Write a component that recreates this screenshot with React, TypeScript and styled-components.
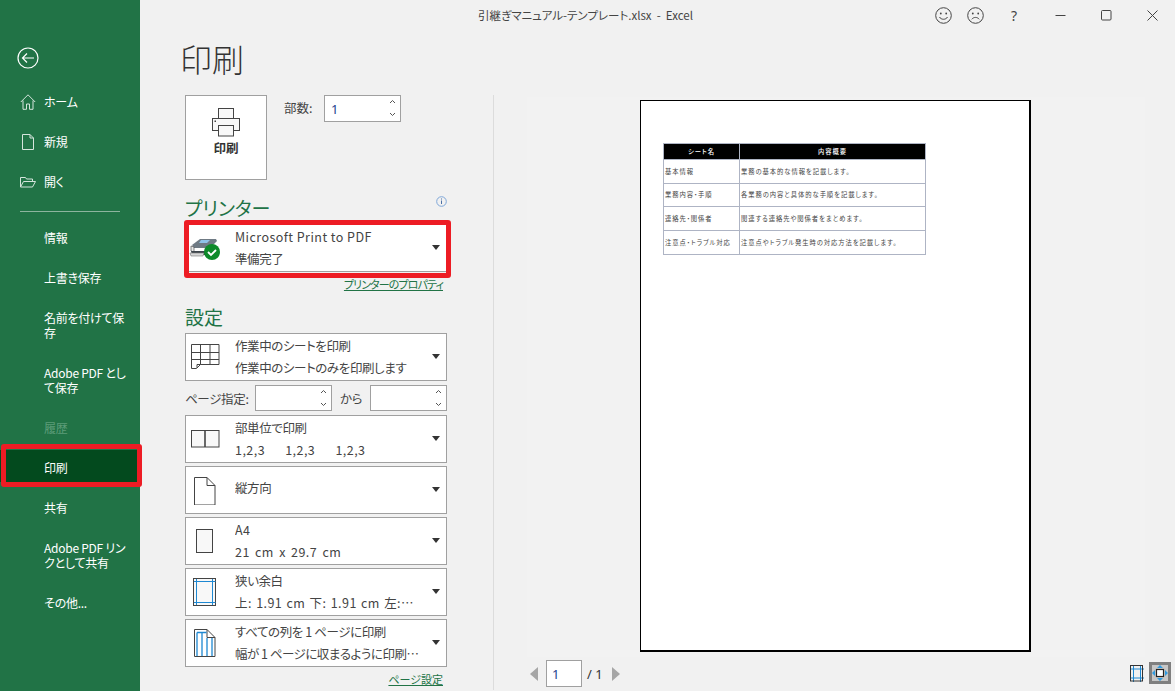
import React from "react";
import styled, { createGlobalStyle } from "styled-components";

const Global = createGlobalStyle`
  html, body { margin: 0; padding: 0; height: 100%; overflow: hidden; background: #f1f1f1; }
  #root { height: 100%; }
  *, *::before, *::after { box-sizing: border-box; }
  body {
    font-family: "Noto Sans CJK JP", "Noto Sans", sans-serif;
    font-size: 13px;
    font-feature-settings: "palt";
    color: #444;
  }
`;

const Shell = styled.div`
  display: flex;
  width: 1175px;
  height: 691px;
  overflow: hidden;
`;

const Sidebar = styled.nav`
  width: 140px;
  flex: none;
  background: #217346;
  color: #fff;
  padding-top: 47px;
  display: flex;
  flex-direction: column;
`;

const BackButton = styled.div`
  height: 22px;
  padding-left: 17px;
  margin-bottom: 13px;
  display: flex;
  align-items: center;
`;

const NavRow = styled.div<{ $tall?: boolean; $disabled?: boolean; $active?: boolean }>`
  position: relative;
  height: ${(p) => (p.$tall ? 55 : 40)}px;
  padding: 0 0 2px 44px;
  display: flex;
  align-items: center;
  white-space: pre-line;
  line-height: 15px;
  font-size: 12px;
  letter-spacing: -0.25px;
  color: ${(p) => (p.$disabled ? "#5d9c79" : "#fff")};
  ${(p) =>
    p.$active &&
    `
    background: linear-gradient(#217346 0 2px, #034a1e 2px 34px, #217346 34px);
    &::after {
      content: "";
      position: absolute;
      left: 1px;
      top: -4px;
      width: 141px;
      height: 43px;
      border: 5px solid #ed1c24;
      border-radius: 3px;
    }
  `}
`;

const NavIcon = styled.span`
  position: absolute;
  left: 20px;
  top: 12px;
  width: 16px;
  height: 16px;
  display: flex;
`;

const NavDivider = styled.div`
  height: 1px;
  margin: 9px 20px 6px;
  background: #8db49e;
`;

const Main = styled.main`
  flex: 1;
  display: flex;
  flex-direction: column;
  min-width: 0;
`;

const TitleBar = styled.header`
  height: 30px;
  flex: none;
  display: flex;
  align-items: center;
  padding-left: 338px;
  color: #444;
  font-size: 11.5px;
`;

const TitleText = styled.div`
  white-space: pre;
  width: 449px;
  font-family: "Noto Sans CJK JP", sans-serif;
`;

const WinButton = styled.button<{ $w: number }>`
  width: ${(p) => p.$w}px;
  flex: none;
  height: 30px;
  padding: 0;
  border: 0;
  background: none;
  color: #444;
  font: 14px "Noto Sans", sans-serif;
  display: flex;
  align-items: center;
  justify-content: center;
`;

const PageTitle = styled.h1`
  margin: 7px 0 0 40px;
  height: 58px;
  font-size: 32px;
  line-height: 42px;
  font-weight: 300;
  color: #333;
`;

const Body = styled.div`
  flex: 1;
  display: flex;
  min-height: 0;
`;

const Controls = styled.section`
  width: 353px;
  flex: none;
  padding-left: 45px;
`;

const TopRow = styled.div`
  display: flex;
  align-items: flex-start;
  height: 85px;
`;

const PrintButton = styled.button`
  width: 82px;
  height: 85px;
  padding: 12px 0 0;
  background: #fff;
  border: 1px solid #a0a0a0;
  display: flex;
  flex-direction: column;
  align-items: center;
  gap: 2px;
  font: bold 12.5px/18px "Noto Sans CJK JP", sans-serif;
  color: #333;
`;

const CopiesLabel = styled.label`
  margin: 4px 0 0 17px;
  width: 40px;
  line-height: 18px;
  font-size: 12.5px;
`;

const Spin = styled.div<{ $w: number; $h: number }>`
  width: ${(p) => p.$w}px;
  height: ${(p) => p.$h}px;
  flex: none;
  background: #fff;
  border: 1px solid #a0a0a0;
  position: relative;
  display: flex;
  align-items: center;
  padding-left: 6px;
  color: #1f3f8f;
  font: 13px "Noto Sans", sans-serif;
`;

const Chevrons = styled.svg`
  position: absolute;
  right: 3px;
  top: 2px;
`;

const SectionHead = styled.h2<{ $top: number }>`
  margin: ${(p) => p.$top}px 0 0;
  height: 26px;
  font-size: 19px;
  font-weight: 400;
  line-height: 26px;
  color: #217346;
  position: relative;
`;

const InfoMark = styled.svg`
  position: absolute;
  right: 0;
  top: 1px;
`;

const HeadRow = styled.div`
  width: 262px;
  position: relative;
`;

const Select = styled.div<{ $printer?: boolean; $gap?: number }>`
  position: relative;
  width: 262px;
  height: 48px;
  margin-top: ${(p) => p.$gap ?? 3}px;
  background: #fff;
  border: 1px solid #a0a0a0;
  display: flex;
  align-items: center;
  ${(p) =>
    p.$printer &&
    `
    &::after {
      content: "";
      position: absolute;
      left: -2px;
      top: -5px;
      width: 267px;
      height: 58px;
      border: 5.5px solid #ed1c24;
      border-radius: 3px;
    }
  `}
`;

const SelectIcon = styled.div`
  width: 39px;
  flex: none;
  display: flex;
  justify-content: center;
  align-items: center;
`;

const SelectText = styled.div<{ $single?: boolean }>`
  margin-left: 10px;
  width: 192px;
  line-height: 22px;
  font-size: 12.5px;
  color: #444;
  padding-bottom: ${(p) => (p.$single ? 4 : 0)}px;
`;

const Line = styled.div<{ $ls?: number; $ws?: number }>`
  white-space: pre;
  overflow: hidden;
  letter-spacing: ${(p) => p.$ls ?? -0.4}px;
  word-spacing: ${(p) => p.$ws ?? 0}px;
`;

const Caret = styled.span`
  position: absolute;
  right: 6px;
  top: 20px;
  width: 0;
  height: 0;
  border-left: 4.5px solid transparent;
  border-right: 4.5px solid transparent;
  border-top: 5px solid #333;
`;

const LinkRow = styled.div<{ $top: number }>`
  width: 258px;
  margin-top: ${(p) => p.$top}px;
  text-align: right;
  line-height: 15px;
  font-size: 11px;
`;

const GreenLink = styled.a<{ $tight?: boolean }>`
  color: #217346;
  text-decoration: underline;
  letter-spacing: ${(p) => (p.$tight ? -0.9 : 0)}px;
`;

const RangeRow = styled.div`
  display: flex;
  align-items: center;
  height: 26px;
  margin-top: 4px;
  margin-bottom: 1px;
  width: 262px;
  font-size: 12.5px;
  letter-spacing: -0.3px;
`;

const RangeLabel = styled.span<{ $w: number; $center?: boolean }>`
  width: ${(p) => p.$w}px;
  flex: none;
  text-align: ${(p) => (p.$center ? "center" : "left")};
`;

const VLine = styled.div`
  width: 1px;
  flex: none;
  height: 595px;
  background: #dcdcdc;
`;

const PreviewPane = styled.section`
  flex: 1;
  padding: 2px 0 0 33px;
  position: relative;
  min-width: 0;
`;

const PreviewBack = styled.div`
  width: 618px;
  height: 560px;
  background: #f2f2f2;
  padding-top: 3px;
  padding-left: 113px;
`;

const Sheet = styled.div`
  width: 391px;
  height: 552px;
  background: #fff;
  border-style: solid;
  border-color: #000;
  border-width: 1px 2px 2px 1px;
  padding: 42px 0 0 22px;
`;

const MiniTable = styled.table`
  border-collapse: collapse;
  table-layout: fixed;
  width: 262px;
  font-size: 6.3px;
  color: #444;
  letter-spacing: 0.95px;
`;

const MiniHead = styled.th`
  background: #000;
  color: #fff;
  height: 16px;
  padding: 0;
  border: 1px solid #aeb4c4;
  font-weight: 500;
  line-height: 10px;
  text-align: center;
`;

const MiniCell = styled.td<{ $h: number }>`
  height: ${(p) => p.$h}px;
  padding: 0 0 0 1px;
  border: 1px solid #aeb4c4;
  white-space: nowrap;
  overflow: hidden;
  line-height: 10px;
`;

const Pager = styled.div`
  display: flex;
  align-items: center;
  height: 27px;
  margin-top: 3px;
  margin-left: 3px;
  font: 13px "Noto Sans", sans-serif;
  color: #333;
`;

const PageBox = styled.div`
  width: 36px;
  height: 27px;
  background: #fff;
  border: 1px solid #a0a0a0;
  margin: 0 5px 0 8px;
  padding-left: 5px;
  display: flex;
  align-items: center;
  color: #1f3f8f;
`;

const PagerNum = styled.span`
  width: 25px;
`;

const ViewTools = styled.div`
  position: absolute;
  right: 4px;
  bottom: 7px;
  display: flex;
  align-items: center;
  gap: 5px;
`;

const ViewActive = styled.div`
  width: 22px;
  height: 22px;
  background: #c6c6c6;
  border: 3px solid #7f7f7f;
  display: flex;
  align-items: center;
  justify-content: center;
`;

const ink = "#444";

const IconBack = () => (
  <svg width="22" height="22" viewBox="0 0 22 22" fill="none" stroke="#fff" strokeWidth="1.2">
    <circle cx="11" cy="11" r="10" />
    <path d="M5.5 11H17M10 6.5 5.5 11l4.500 4.500" />
  </svg>
);
const IconHome = () => (
  <svg width="16" height="16" viewBox="0 0 16 16" fill="none" stroke="#d5e5dc" strokeWidth="1">
    <path d="M.8 8 8 .8 15.200 8M3 6.500v8.800h3.500V10h3v5.300H13V6.500" />
  </svg>
);
const IconNew = () => (
  <svg width="16" height="16" viewBox="0 0 16 16" fill="none" stroke="#d5e5dc" strokeWidth="1">
    <path d="M2.500.5h7.500l3.500 3.500v11.500h-11zM10 .5V4h3.500" />
  </svg>
);
const IconOpen = () => (
  <svg width="16" height="16" viewBox="0 0 16 16" fill="none" stroke="#d5e5dc" strokeWidth="1">
    <path d="M.5 13V3.500h5l1 1.500h6v2M.5 13h12l3-5.500H3.500z" />
  </svg>
);
const IconSmile = ({ sad }: { sad?: boolean }) => (
  <svg width="17" height="17" viewBox="0 0 17 17" fill="none" stroke={ink} strokeWidth="1">
    <circle cx="8.500" cy="8.500" r="7.800" />
    <circle cx="5.800" cy="6.500" r=".9" fill={ink} stroke="none" />
    <circle cx="11.200" cy="6.500" r=".9" fill={ink} stroke="none" />
    <path d={sad ? "M4.800 12.300c1.800-2.500 5.600-2.500 7.400 0" : "M4.500 10c1.500 3 6.500 3 8 0"} />
  </svg>
);
const IconMin = () => (
  <svg width="11" height="11" viewBox="0 0 11 11" stroke={ink}>
    <path d="M.5 5.500h10" />
  </svg>
);
const IconMax = () => (
  <svg width="11" height="11" viewBox="0 0 11 11" fill="none" stroke={ink}>
    <rect x=".5" y=".5" width="9.500" height="9.500" rx="1" />
  </svg>
);
const IconClose = () => (
  <svg width="11" height="11" viewBox="0 0 11 11" fill="none" stroke={ink}>
    <path d="M.5.5l10 10M10.500.5l-10 10" />
  </svg>
);
const IconPrinter = () => (
  <svg width="30" height="29" viewBox="-1 0 30 29" fill="#f8f8f8" stroke="#444" strokeWidth="1">
    <rect x="6.500" y=".5" width="15" height="10" />
    <rect x=".5" y="10.500" width="27" height="12" />
    <rect x="6.500" y="17.500" width="15" height="10.500" />
    <rect x="2.500" y="12.500" width="1.500" height="1.500" fill="#444" stroke="none" />
  </svg>
);
const SpinChevrons = () => (
  <Chevrons width="9" height="20" viewBox="0 0 9 20" fill="none" stroke="#555">
    <path d="M2 5l2.500-2.500L7 5M2 15l2.500 2.500L7 15" />
  </Chevrons>
);
const IconInfo = () => (
  <InfoMark width="11" height="11" viewBox="0 0 11 11" fill="none">
    <circle cx="5.500" cy="5.500" r="4.800" stroke="#7ea6d8" />
    <path d="M5.500 4.500v3.500M5.500 2.500v1" stroke="#4a6fa5" />
  </InfoMark>
);
const IconPrinterState = () => (
  <svg width="33" height="26" viewBox="0 0 33 26">
    <path d="M3 10 11 4h16l1 2-7 7H5z" fill="#6f7a84" />
    <path d="M12 5h9l-3 3h-8z" fill="#8fc2e8" />
    <path d="M2 11l3 1v5l-3-1z" fill="#e8e8e8" stroke="#555" strokeWidth=".7" />
    <path d="M2 16h16l7-6v5l-7 5H3z" fill="#3e464d" />
    <path d="M1 18h14l-1 3H2z" fill="#d8d8d8" stroke="#777" strokeWidth=".6" />
    <circle cx="23" cy="17" r="8" fill="#0e8a2a" />
    <path d="M19 17l3 3 5-5" fill="none" stroke="#fff" strokeWidth="1.800" />
  </svg>
);
const IconSheet = () => (
  <svg width="29" height="30" viewBox="0 -2 29 30" fill="none" stroke="#444">
    <path d="M.5.500h27.500v20h-18.500l-4 4h-5zM.5 8.500h27.500M.5 15.500h27.500M9.500.5v20M19 .5v20M6 24v-3.500h3.500" />
  </svg>
);
const IconCollate = () => (
  <svg width="29" height="20" viewBox="0 -1 29 20" fill="#f8f8f8" stroke="#444">
    <rect x=".5" y=".5" width="27.500" height="16.500" />
    <path d="M14 .5v16.500" strokeWidth="1.600" />
  </svg>
);
const IconPortrait = () => (
  <svg width="23" height="30" viewBox="0 -2 23 30" fill="#fff" stroke="#444">
    <path d="M.5.500h12.500l8 8v19.500h-20.500zM13 .5V8.500h8" />
  </svg>
);
const IconA4 = () => (
  <svg width="19" height="24" viewBox="0 0 19 24" fill="#f8f8f8" stroke="#444">
    <rect x=".5" y=".5" width="16" height="23" />
  </svg>
);
const IconMargins = () => (
  <svg width="25" height="30" viewBox="0 -1 25 30" fill="#f8f8f8">
    <rect x=".5" y=".5" width="22" height="27" stroke="#444" />
    <path d="M3.500 1v26M19.500 1v26M1 3.500h21.500M1 24.500h21.500" stroke="#1e88d2" fill="none" />
  </svg>
);
const IconFit = () => (
  <svg width="23" height="30" viewBox="0 -1 23 30" fill="#fff">
    <path d="M.5.500h12.500l8 8v19h-20.500z" stroke="#444" />
    <path d="M13 .5V8.500h8" stroke="#444" fill="none" />
    <path d="M3 3.500h9.500M3 3.500V27M8 3.500V27M13 9V27M18 9V27" stroke="#1e88d2" strokeWidth="1.300" fill="none" />
  </svg>
);
const IconShowMargins = () => (
  <svg width="14" height="17" viewBox="0 0 14 17" fill="none">
    <path d="M3.500 0v17M10.500 0v17M0 4h14M0 13h14" stroke="#1e88d2" />
    <rect x=".5" y=".5" width="12" height="15.500" stroke="#333" />
  </svg>
);
const IconFitPage = () => (
  <svg width="16" height="16" viewBox="0 0 16 16">
    <rect x="4.500" y="4.500" width="7" height="7" fill="#fff" stroke="#222" strokeWidth="1.200" />
    <path d="M8 0l3 3H5zM8 16l3-3H5zM0 8l3-3v6zM16 8l-3-3v6z" fill="#2f9be0" />
  </svg>
);
const Tri = ({ right }: { right?: boolean }) => (
  <svg width="8" height="14" viewBox="0 0 8 14">
    <path d={right ? "M0 0l8 7-8 7z" : "M8 0L0 7l8 7z"} fill="#a6a6a6" />
  </svg>
);

const navItems: { label: string; tall?: boolean; disabled?: boolean; active?: boolean }[] = [
  { label: "情報" },
  { label: "上書き保存" },
  { label: "名前を付けて保\n存", tall: true },
  { label: "Adobe PDF とし\nて保存", tall: true },
  { label: "履歴", disabled: true },
  { label: "印刷", active: true },
  { label: "共有" },
  { label: "Adobe PDF リン\nクとして共有", tall: true },
];

const rows = [
  ["基本情報", "業務の基本的な情報を記載します。", 24],
  ["業務内容・手順", "各業務の内容と具体的な手順を記載します。", 23],
  ["連絡先・関係者", "関連する連絡先や関係者をまとめます。", 24],
  ["注意点・トラブル対応", "注意点やトラブル発生時の対応方法を記載します。", 24],
] as const;

export default function App() {
  return (
    <Shell>
      <Global />
      <Sidebar>
        <BackButton>
          <IconBack />
        </BackButton>
        <NavRow>
          <NavIcon><IconHome /></NavIcon>ホーム
        </NavRow>
        <NavRow>
          <NavIcon><IconNew /></NavIcon>新規
        </NavRow>
        <NavRow>
          <NavIcon><IconOpen /></NavIcon>開く
        </NavRow>
        <NavDivider />
        {navItems.map((n) => (
          <NavRow key={n.label} $tall={n.tall} $disabled={n.disabled} $active={n.active}>
            {n.label}
          </NavRow>
        ))}
        <NavRow>その他...</NavRow>
      </Sidebar>
      <Main>
        <TitleBar>
          <TitleText>引継ぎマニュアル-テンプレート.xlsx  -  Excel</TitleText>
          <WinButton $w={32}><IconSmile /></WinButton>
          <WinButton $w={32}><IconSmile sad /></WinButton>
          <WinButton $w={46}>?</WinButton>
          <WinButton $w={46}><IconMin /></WinButton>
          <WinButton $w={46}><IconMax /></WinButton>
          <WinButton $w={46}><IconClose /></WinButton>
        </TitleBar>
        <PageTitle>印刷</PageTitle>
        <Body>
          <Controls>
            <TopRow>
              <PrintButton>
                <IconPrinter />
                印刷
              </PrintButton>
              <CopiesLabel>部数:</CopiesLabel>
              <Spin $w={77} $h={27}>
                1
                <SpinChevrons />
              </Spin>
            </TopRow>
            <HeadRow>
              <SectionHead $top={15}>プリンター</SectionHead>
              <IconInfo />
            </HeadRow>
            <Select $printer $gap={3}>
              <SelectIcon><IconPrinterState /></SelectIcon>
              <SelectText>
                <Line $ls={0.45}>Microsoft Print to PDF</Line>
                <Line>準備完了</Line>
              </SelectText>
              <Caret />
            </Select>
            <LinkRow $top={5}>
              <GreenLink $tight>プリンターのプロパティ</GreenLink>
            </LinkRow>
            <SectionHead $top={12}>設定</SectionHead>
            <Select $gap={3}>
              <SelectIcon><IconSheet /></SelectIcon>
              <SelectText>
                <Line>作業中のシートを印刷</Line>
                <Line>作業中のシートのみを印刷します</Line>
              </SelectText>
              <Caret />
            </Select>
            <RangeRow>
              <RangeLabel $w={70}>ページ指定:</RangeLabel>
              <Spin $w={77} $h={26}><SpinChevrons /></Spin>
              <RangeLabel $w={38} $center>から</RangeLabel>
              <Spin $w={77} $h={26}><SpinChevrons /></Spin>
            </RangeRow>
            <Select $gap={4}>
              <SelectIcon><IconCollate /></SelectIcon>
              <SelectText>
                <Line>部単位で印刷</Line>
                <Line $ls={0.45} $ws={1.8}>1,2,3    1,2,3    1,2,3</Line>
              </SelectText>
              <Caret />
            </Select>
            <Select>
              <SelectIcon><IconPortrait /></SelectIcon>
              <SelectText $single><Line>縦方向</Line></SelectText>
              <Caret />
            </Select>
            <Select>
              <SelectIcon><IconA4 /></SelectIcon>
              <SelectText>
                <Line $ls={0.45}>A4</Line>
                <Line $ls={0.45} $ws={2}>21 cm x 29.7 cm</Line>
              </SelectText>
              <Caret />
            </Select>
            <Select>
              <SelectIcon><IconMargins /></SelectIcon>
              <SelectText>
                <Line>狭い余白</Line>
                <Line $ls={0.45} $ws={1}>上: 1.91 cm 下: 1.91 cm 左:…</Line>
              </SelectText>
              <Caret />
            </Select>
            <Select>
              <SelectIcon><IconFit /></SelectIcon>
              <SelectText>
                <Line>すべての列を 1 ページに印刷</Line>
                <Line $ls={-0.5}>幅が 1 ページに収まるように印刷…</Line>
              </SelectText>
              <Caret />
            </Select>
            <LinkRow $top={5}>
              <GreenLink>ページ設定</GreenLink>
            </LinkRow>
          </Controls>
          <VLine />
          <PreviewPane>
            <PreviewBack>
              <Sheet>
                <MiniTable>
                  <colgroup>
                    <col width="76" />
                    <col width="186" />
                  </colgroup>
                  <thead>
                    <tr>
                      <MiniHead>シート名</MiniHead>
                      <MiniHead>内容概要</MiniHead>
                    </tr>
                  </thead>
                  <tbody>
                    {rows.map(([a, b, h]) => (
                      <tr key={a}>
                        <MiniCell $h={h}>{a}</MiniCell>
                        <MiniCell $h={h}>{b}</MiniCell>
                      </tr>
                    ))}
                  </tbody>
                </MiniTable>
              </Sheet>
            </PreviewBack>
            <Pager>
              <Tri />
              <PageBox>1</PageBox>
              <PagerNum>/ 1</PagerNum>
              <Tri right />
            </Pager>
            <ViewTools>
              <IconShowMargins />
              <ViewActive><IconFitPage /></ViewActive>
            </ViewTools>
          </PreviewPane>
        </Body>
      </Main>
    </Shell>
  );
}
